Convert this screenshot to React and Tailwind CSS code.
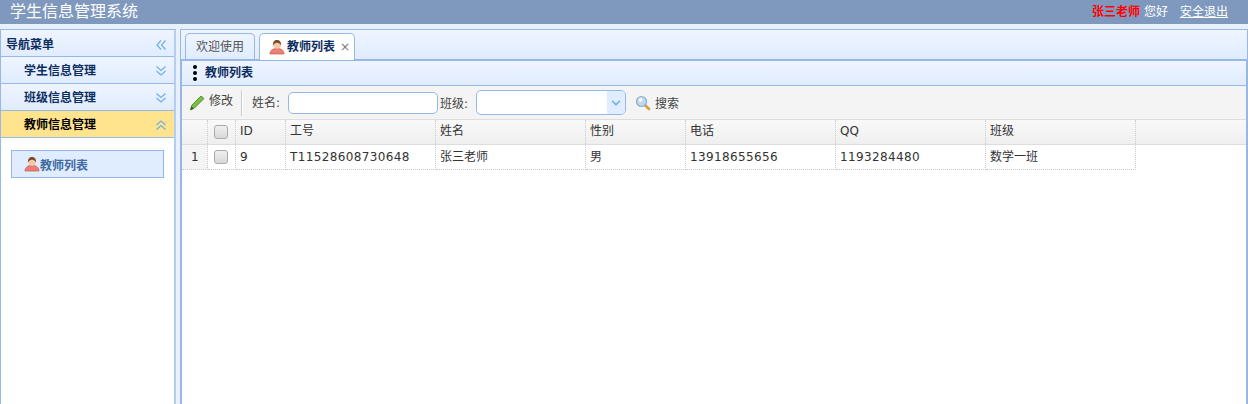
import { ChevronDown } from 'lucide-react'

const FONT = "font-['DejaVu_Sans','Noto_Sans_CJK_SC',sans-serif]"
const COLS = 'grid grid-cols-[26px_28px_50px_150px_150px_100px_150px_150px_150px]'
const HEAD = ['', '', 'ID', '工号', '姓名', '性别', '电话', 'QQ', '班级']
const ROW = ['1', '', '9', 'T11528608730648', '张三老师', '男', '13918655656', '1193284480', '数学一班']

function DoubleChevron({ dir = 'down', color = '#6fb0e3' }) {
  const rotate = dir === 'down' ? '' : dir === 'up' ? 'rotate-180' : 'rotate-90'
  return (
    <svg width="12" height="12" viewBox="0 0 12 12" fill="none" stroke={color} strokeWidth="1.2" className={rotate}>
      <path d="M1.5 1.5 6 5.5 10.5 1.5" />
      <path d="M1.5 6 6 10 10.5 6" />
    </svg>
  )
}

function UserIcon() {
  return (
    <svg width="16" height="16" viewBox="0 0 16 16" className="shrink-0">
      <path d="M1 15c0-3.500 2.500-5.500 7-5.500s7 2 7 5.500z" fill="#ea7f72" stroke="#c9564e" strokeWidth="0.7" />
      <circle cx="8" cy="6" r="3.800" fill="#f6c9a8" />
      <path d="M4 6.500c-.5-3.500 1.500-5.500 4-5.500s4.500 2 4 5.500c-1-1.800-2-2.700-4-2.700s-3 1-4 2.700z" fill="#7a4a2a" />
    </svg>
  )
}

function PencilIcon() {
  return (
    <svg width="16" height="16" viewBox="0 0 16 16" className="shrink-0">
      <path d="M12 1 15 3.500 5.500 13 1.500 15 2.800 10.200z" fill="#7cc043" stroke="#3e7f1f" strokeWidth="0.8" />
      <path d="M1.500 15 2.400 11.500 4.800 13.500z" fill="#33561c" />
    </svg>
  )
}

function SearchIcon() {
  return (
    <svg width="16" height="16" viewBox="0 0 16 16" className="shrink-0">
      <path d="M10 10 14 14" stroke="#e09a4a" strokeWidth="2.600" strokeLinecap="round" />
      <circle cx="6.500" cy="6.500" r="5" fill="#bcd9ef" stroke="#8fb0c8" strokeWidth="1.200" />
      <circle cx="5.500" cy="5" r="2" fill="#f2f8fd" />
    </svg>
  )
}

function Checkbox() {
  return <span className="block w-[14px] h-[14px] rounded-[3px] border border-[#aaa] bg-gradient-to-b from-[#f0f0f0] to-[#d8d8d8]" />
}

function AccordionRow({ label, dir, active }) {
  return (
    <div
      className={`h-[27px] shrink-0 flex items-center justify-between pt-px pl-[23px] pr-[7px] border-b border-[#95b8e7] text-xs font-bold ${
        active ? 'bg-[#ffe48d] text-black' : 'bg-gradient-to-b from-[#eff5ff] to-[#e0ecff] text-[#0e2d5f]'
      }`}
    >
      <span>{label}</span>
      <DoubleChevron dir={dir} />
    </div>
  )
}

export default function App() {
  return (
    <div className={`h-[404px] w-[1248px] overflow-hidden flex flex-col bg-[#e8f0fb] text-xs text-[#333] ${FONT}`}>
      <header className="h-6 shrink-0 bg-[#7f99be] flex items-center justify-between pl-[10px] pr-[20px] text-white">
        <span className="text-base leading-5">学生信息管理系统</span>
        <div className="flex items-center">
          <span className="font-bold text-[#f00]">张三老师</span>
          <span className="ml-1">您好</span>
          <span className="ml-3 underline">安全退出</span>
        </div>
      </header>

      <div className="flex-1 flex gap-[4px] pt-[5px] -mb-[2px] min-h-0">
        <aside className="w-[176px] shrink-0 border border-r-2 border-[#95b8e7] border-r-[#b5cdef] bg-white flex flex-col">
          <div className="h-[27px] shrink-0 flex items-center justify-between pt-[3px] pl-[5px] pr-[7px] border-b border-[#95b8e7] bg-gradient-to-b from-[#eff5ff] to-[#e0ecff] font-bold text-[#0e2d5f]">
            <span>导航菜单</span>
            <DoubleChevron dir="left" />
          </div>
          <AccordionRow label="学生信息管理" dir="down" />
          <AccordionRow label="班级信息管理" dir="down" />
          <AccordionRow label="教师信息管理" dir="up" active />
          <div className="px-[10px] pt-[12px]">
            <div className="h-[28px] flex items-center pl-[12px] border border-[#95b8e7] bg-[#e0ecff] font-bold text-[#416aa3]">
              <UserIcon />
              <span className="mt-[3px]">教师列表</span>
            </div>
          </div>
        </aside>

        <main className="flex-1 min-w-0 flex flex-col">
          <div className="h-[30px] shrink-0 flex items-end gap-[4px] pl-[4px] border border-b-0 border-[#95b8e7] bg-gradient-to-b from-[#eff5ff] to-[#e0ecff]">
            <div className="h-[26px] w-[70px] flex items-center justify-center rounded-t-[5px] border border-b-0 border-[#95b8e7] bg-gradient-to-b from-[#eff5ff] to-[#e0ecff] text-[#555]">
              欢迎使用
            </div>
            <div className="relative z-10 -mb-px h-[27px] w-[96px] flex items-center gap-[2px] pl-[9px] rounded-t-[5px] border border-b-0 border-[#95b8e7] bg-white font-bold text-[#0e2d5f]">
              <UserIcon />
              <span>教师列表</span>
              <span className="ml-[3px] font-normal text-[#777]">×</span>
            </div>
          </div>

          <div className="flex-1 min-h-0 border-2 border-[#95b8e7] bg-white flex flex-col">
            <div className="h-[25px] shrink-0 flex items-center gap-[8px] pl-[11px] border-b border-[#95b8e7] bg-gradient-to-b from-[#eff5ff] to-[#e0ecff] font-bold text-[#0e2d5f]">
              <span className="flex flex-col gap-[2px]">
                <span className="w-1 h-1 rounded-full bg-black" />
                <span className="w-1 h-1 rounded-full bg-black" />
                <span className="w-1 h-1 rounded-full bg-black" />
              </span>
              <span>教师列表</span>
            </div>

            <div className="h-[34px] shrink-0 flex items-center pl-[7px] border-b border-[#ddd] bg-[#f4f4f4] text-[#444]">
              <PencilIcon />
              <span className="ml-[4px] -mt-1">修改</span>
              <span className="ml-[8px] mr-[9px] h-[26px] w-[2px] border-x border-l-[#ccc] border-r-white" />
              <span className="mt-px">姓名:</span>
              <span className="ml-[8px] w-[150px] h-[22px] rounded-[5px] border border-[#95b8e7] bg-white" />
              <span className="ml-[2px] mt-[2px]">班级:</span>
              <span className="ml-[8px] w-[150px] h-[25px] rounded-[5px] border border-[#95b8e7] bg-white flex justify-end overflow-hidden">
                <span className="w-[18px] bg-[#e0ecff] flex items-center justify-center">
                  <ChevronDown size={14} strokeWidth={3} color="#6fb0e3" />
                </span>
              </span>
              <span className="ml-[9px]"><SearchIcon /></span>
              <span className="ml-[4px] mt-[2px]">搜索</span>
            </div>

            <div className="h-[25px] shrink-0 border-b border-[#ddd] bg-gradient-to-b from-[#f9f9f9] to-[#efefef]">
              <div className={COLS}>
                {HEAD.map((text, i) => (
                  <div
                    key={i}
                    className={`h-[24px] flex items-center justify-start border-r border-dotted border-[#ccc] pl-[4px] ${i === 1 ? 'pb-px' : 'pb-[3px]'}`}
                  >
                    {i === 1 ? <span className="ml-[2px]"><Checkbox /></span> : text}
                  </div>
                ))}
              </div>
            </div>

            <div className={`${COLS} w-max`}>
              {ROW.map((text, i) => (
                <div
                  key={i}
                  className={`h-[25px] flex items-center border-r border-b border-dotted border-[#ccc] ${
                    i === 0 ? 'bg-[#f4f4f4] pl-[9px]' : 'pl-[4px]'
                  } ${i === 3 || i === 6 || i === 7 ? 'tracking-[0.37px]' : ''}`}
                >
                  {i === 1 ? <span className="ml-[2px]"><Checkbox /></span> : text}
                </div>
              ))}
            </div>
          </div>
        </main>
      </div>
    </div>
  )
}
